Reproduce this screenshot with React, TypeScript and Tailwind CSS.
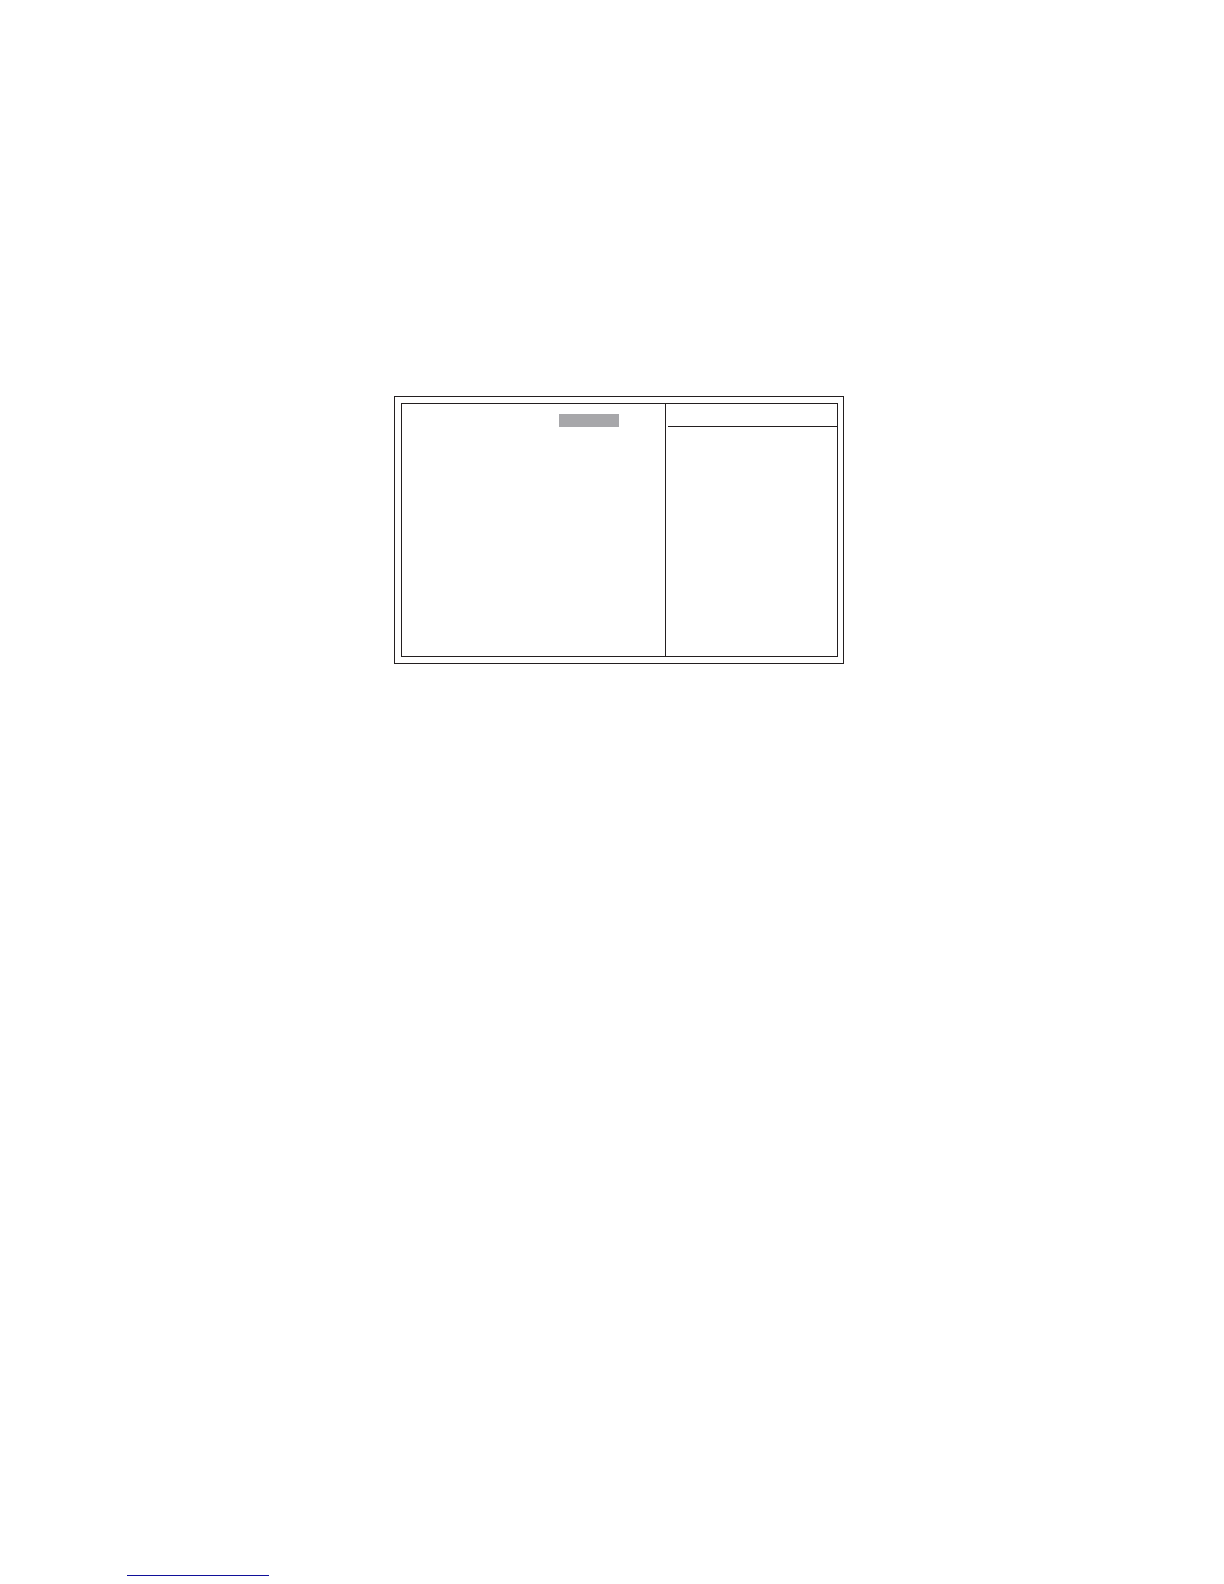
import React from 'react';

const SetupPanel: React.FC = () => {
  return (
    <section className="w-full max-w-[450px] border border-[#231f20] p-1.5 pr-[5px]">
      <div className="grid min-h-[254px] grid-cols-[263fr_172fr] border border-[#231f20]">
        {/* Settings */}
        <div className="flex items-start justify-end pt-2.5 pr-[46px]">
          <div className="h-[13px] w-[60px] bg-[#a7a7aa]"></div>
        </div>

        {/* Help */}
        <aside className="border-l border-[#231f20] pl-0.5">
          <header className="h-[23px] border-b border-[#231f20]"></header>
        </aside>
      </div>
    </section>
  );
};

const App: React.FC = () => {
  return (
    <div className="flex min-h-screen flex-col bg-white">
      <main className="flex justify-center pt-[396px] pl-3.5">
        <SetupPanel />
      </main>

      <footer className="mt-auto flex pb-2 pl-[127px]">
        <a href="#" aria-label="Home" className="block h-4 w-[142px] border-b border-[#10109a]"></a>
      </footer>
    </div>
  );
};

export default App;
